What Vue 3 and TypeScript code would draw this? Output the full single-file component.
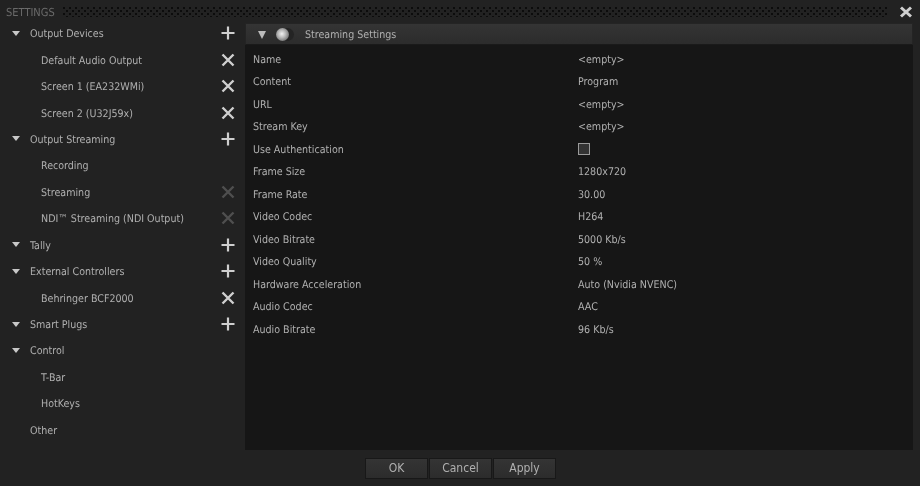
<script setup lang="ts">
interface TreeRow { label: string; level: 0 | 1; arrow?: boolean; action?: 'add' | 'del' | 'off' }
const tree: TreeRow[] = [
  { label: 'Output Devices', level: 0, arrow: true, action: 'add' },
  { label: 'Default Audio Output', level: 1, action: 'del' },
  { label: 'Screen 1 (EA232WMi)', level: 1, action: 'del' },
  { label: 'Screen 2 (U32J59x)', level: 1, action: 'del' },
  { label: 'Output Streaming', level: 0, arrow: true, action: 'add' },
  { label: 'Recording', level: 1 },
  { label: 'Streaming', level: 1, action: 'off' },
  { label: 'NDI™ Streaming (NDI Output)', level: 1, action: 'off' },
  { label: 'Tally', level: 0, arrow: true, action: 'add' },
  { label: 'External Controllers', level: 0, arrow: true, action: 'add' },
  { label: 'Behringer BCF2000', level: 1, action: 'del' },
  { label: 'Smart Plugs', level: 0, arrow: true, action: 'add' },
  { label: 'Control', level: 0, arrow: true },
  { label: 'T-Bar', level: 1 },
  { label: 'HotKeys', level: 1 },
  { label: 'Other', level: 0 },
]
const props: { k: string; v?: string }[] = [
  { k: 'Name', v: '<empty>' },
  { k: 'Content', v: 'Program' },
  { k: 'URL', v: '<empty>' },
  { k: 'Stream Key', v: '<empty>' },
  { k: 'Use Authentication' },
  { k: 'Frame Size', v: '1280x720' },
  { k: 'Frame Rate', v: '30.00' },
  { k: 'Video Codec', v: 'H264' },
  { k: 'Video Bitrate', v: '5000 Kb/s' },
  { k: 'Video Quality', v: '50 %' },
  { k: 'Hardware Acceleration', v: 'Auto (Nvidia NVENC)' },
  { k: 'Audio Codec', v: 'AAC' },
  { k: 'Audio Bitrate', v: '96 Kb/s' },
]
</script>

<template>
  <div class="win">
    <header class="title">
      <span class="title-text">SETTINGS</span>
      <span class="dots"></span>
      <svg class="close" width="14" height="12" viewBox="0 0 14 12">
        <path d="M2 1.5 L12 10.5 M12 1.5 L2 10.5" stroke="#cfcfcf" stroke-width="3" fill="none" />
      </svg>
    </header>
    <main class="main">
      <aside class="tree">
        <div v-for="r in tree" :key="r.label" class="row" :class="{ sub: r.level === 1 }">
          <span class="arrow-slot"><i v-if="r.arrow" class="arrow"></i></span>
          <span class="label">{{ r.label }}</span>
          <svg v-if="r.action === 'add'" class="act" width="16" height="16" viewBox="0 0 16 16">
            <path d="M8 1.5 V14.5 M1.5 8 H14.5" stroke="#cfcfcf" stroke-width="2.2" fill="none" />
          </svg>
          <svg v-else-if="r.action" class="act" width="16" height="16" viewBox="0 0 16 16">
            <path d="M2.5 2.5 L13.5 13.5 M13.5 2.5 L2.5 13.5" :stroke="r.action === 'off' ? '#4f4f4f' : '#cfcfcf'" stroke-width="2.4" fill="none" />
          </svg>
        </div>
      </aside>
      <section class="panel">
        <div class="panel-head">
          <i class="head-arrow"></i>
          <span class="ball"></span>
          <span class="head-text">Streaming Settings</span>
        </div>
        <div class="props">
          <div v-for="p in props" :key="p.k" class="prop">
            <span class="k">{{ p.k }}</span>
            <span v-if="p.v" class="v">{{ p.v }}</span>
            <span v-else class="check"></span>
          </div>
        </div>
      </section>
    </main>
    <footer class="foot">
      <button class="btn">OK</button>
      <button class="btn">Cancel</button>
      <button class="btn">Apply</button>
    </footer>
  </div>
</template>

<style>
html, body { margin: 0; background: #222222; }
</style>

<style scoped>
.win {
  width: 920px;
  height: 486px;
  box-sizing: border-box;
  background: #222222;
  font-family: "DejaVu Sans Condensed", "DejaVu Sans", sans-serif;
  font-stretch: condensed;
  font-size: 10.6px;
  text-rendering: geometricPrecision;
  color: #b0b0b0;
  display: flex;
  flex-direction: column;
  overflow: hidden;
  filter: blur(0.3px);
}
.title {
  height: 20px;
  flex: none;
  display: flex;
  align-items: center;
  padding: 4px 7px 0 6px;
  box-sizing: border-box;
}
.title-text { color: #6a6a6a; font-size: 11px; }
.dots {
  flex: 1;
  height: 10px;
  margin: 0 11px 0 8px;
  background-image:
    radial-gradient(circle at 1px 1px, #0c0c0c 1px, transparent 1.2px),
    radial-gradient(circle at 1px 1px, #0c0c0c 1px, transparent 1.2px);
  background-size: 6px 6px;
  background-position: 0 0, 3px 3px;
}
.close { flex: none; }
.main { height: 430px; flex: none; display: flex; }
.tree {
  width: 245px;
  flex: none;
  box-sizing: border-box;
}
.row {
  height: 26.45px;
  display: flex;
  align-items: center;
  padding: 0 9px 0 10px;
  box-sizing: border-box;
}
.arrow-slot { width: 20px; flex: none; display: flex; align-items: center; }
.arrow {
  width: 0; height: 0;
  border-left: 4px solid transparent;
  border-right: 4px solid transparent;
  border-top: 5px solid #c8c8c8;
  display: block;
  margin-left: 2px;
}
.sub .arrow-slot { width: 31px; }
.label { flex: 1; white-space: nowrap; padding-top: 2px; }
.act { flex: none; }
.panel {
  flex: none;
  width: 668px;
  height: 427px;
  margin-top: 3px;
  background: #161616;
  box-sizing: border-box;
  display: flex;
  flex-direction: column;
}
.panel-head {
  height: 22px;
  flex: none;
  background: linear-gradient(#343434, #2c2c2c);
  border: 1px solid #242424;
  border-bottom-color: #1a1a1a;
  display: flex;
  align-items: center;
  padding: 1px 0 0 12px;
  box-sizing: border-box;
}
.head-arrow {
  width: 0; height: 0;
  border-left: 4.5px solid transparent;
  border-right: 4.5px solid transparent;
  border-top: 8px solid #bcbcbc;
  display: block;
}
.ball {
  width: 13px; height: 13px;
  border-radius: 50%;
  margin-left: 10px;
  background: radial-gradient(circle at 45% 45%, #f2f2f2 0, #bdbdbd 35%, #6a6a6a 80%);
  box-shadow: 5px 0 0 0 #242424;
}
.head-text { margin-left: 16px; padding-top: 1px; }
.props { padding-top: 3px; }
.prop {
  height: 22.5px;
  display: flex;
  align-items: center;
  padding-left: 8px;
}
.k { width: 325px; flex: none; white-space: nowrap; padding-top: 1px; }
.v { white-space: nowrap; padding-top: 1px; }
.check {
  width: 10px; height: 10px;
  border: 1px solid #9a9a9a;
  background: #333333;
  display: block;
}
.foot {
  flex: 1;
  display: flex;
  justify-content: center;
  align-items: center;
  gap: 1px;
  padding: 0 0 0 1px;
  box-sizing: border-box;
}
.btn {
  width: 63px;
  height: 21px;
  padding: 0;
  font: inherit;
  font-size: 12px;
  color: #b0b0b0;
  background: linear-gradient(#343434, #2c2c2c);
  border: 1px solid #181818;
}
</style>
